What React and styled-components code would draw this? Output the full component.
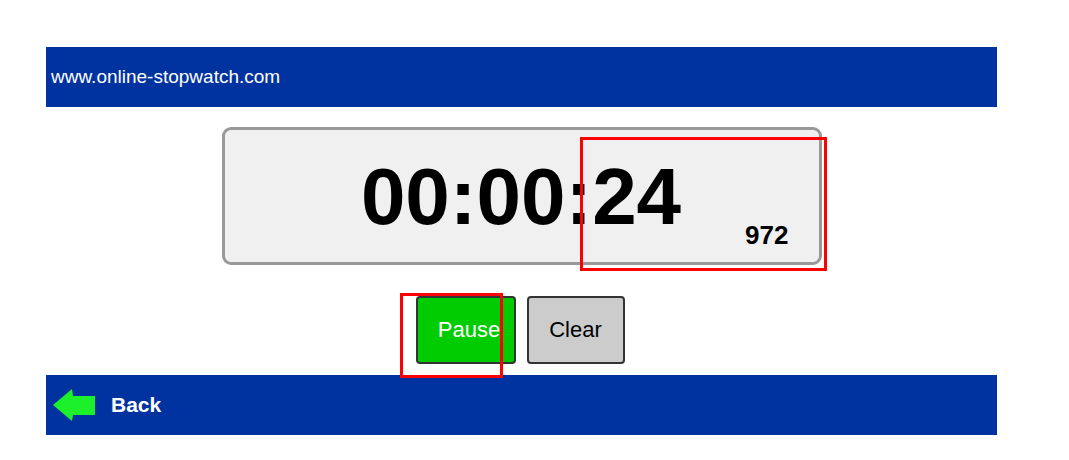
import styled, { createGlobalStyle } from "styled-components";

const GlobalStyle = createGlobalStyle`
  body {
    margin: 0;
    background: #ffffff;
    font-family: "Liberation Sans", Arial, sans-serif;
  }
`;

const Page = styled.div`
  position: relative;
  width: 951px;
  margin-left: 46px;
  padding-top: 47px;
`;

const Bar = styled.div`
  height: 60px;
  background: #0033a0;
  display: flex;
  align-items: center;
  color: #ffffff;
  padding-left: ${({ pad }) => pad || "5px"};
  box-sizing: border-box;
`;

const SiteName = styled.span`
  font-size: 19px;
`;

const Display = styled.div`
  position: relative;
  width: 600px;
  height: 138px;
  box-sizing: border-box;
  margin: 20px auto 0;
  border: 3px solid #999999;
  border-radius: 9px;
  background: #f0f0f0;
  display: flex;
  align-items: center;
  justify-content: center;
`;

const Time = styled.div`
  font-size: 80px;
  font-weight: bold;
  color: #000;
  line-height: 1;
  margin-top: 1px;
  margin-right: 1px;
`;

const Millis = styled.div`
  position: absolute;
  right: 30px;
  bottom: 11px;
  font-size: 26px;
  font-weight: bold;
  color: #000;
`;

const Controls = styled.div`
  display: flex;
  justify-content: center;
  gap: 11px;
  margin: 31px 0 11px;
  padding-right: 3px;
`;

const Button = styled.button`
  width: ${({ w }) => w}px;
  height: 68px;
  border: 2px solid #333333;
  border-radius: 4px;
  background: ${({ bg }) => bg};
  color: ${({ fg }) => fg};
  font-family: "Liberation Sans", Arial, sans-serif;
  font-size: 22px;
  padding: 0 0 0 ${({ shift }) => shift || 0}px;
`;

const BackLink = styled.div`
  display: flex;
  align-items: center;
  gap: 15px;
  font-size: 21px;
  font-weight: bold;
`;

const Marker = styled.div`
  position: absolute;
  border: 3px solid #ff0000;
  box-sizing: border-box;
  pointer-events: none;
`;

function BackArrow() {
  return (
    <svg width="44" height="34" viewBox="0 0 44 34">
      <defs>
        <filter id="soft" x="-10%" y="-10%" width="120%" height="120%">
          <feGaussianBlur stdDeviation="0.7" />
        </filter>
      </defs>
      <path
        d="M1 17 L20 1 L21 8 L43 8 L43 27 L21 27 L20 33 Z"
        fill="#1ef02a"
        filter="url(#soft)"
      />
    </svg>
  );
}

export default function App() {
  return (
    <>
      <GlobalStyle />
      <Page>
        <Bar>
          <SiteName>www.online-stopwatch.com</SiteName>
        </Bar>
        <Display>
          <Time>00:00:24</Time>
          <Millis>972</Millis>
        </Display>
        <Controls>
          <Button w={100} bg="#00cc00" fg="#ffffff" shift={7}>
            Pause
          </Button>
          <Button w={98} bg="#cccccc" fg="#000000">
            Clear
          </Button>
        </Controls>
        <Bar pad="6px">
          <BackLink>
            <BackArrow />
            Back
          </BackLink>
        </Bar>
        <Marker style={{ left: 534, top: 137, width: 247, height: 134 }} />
        <Marker style={{ left: 354, top: 293, width: 103, height: 85 }} />
      </Page>
    </>
  );
}
